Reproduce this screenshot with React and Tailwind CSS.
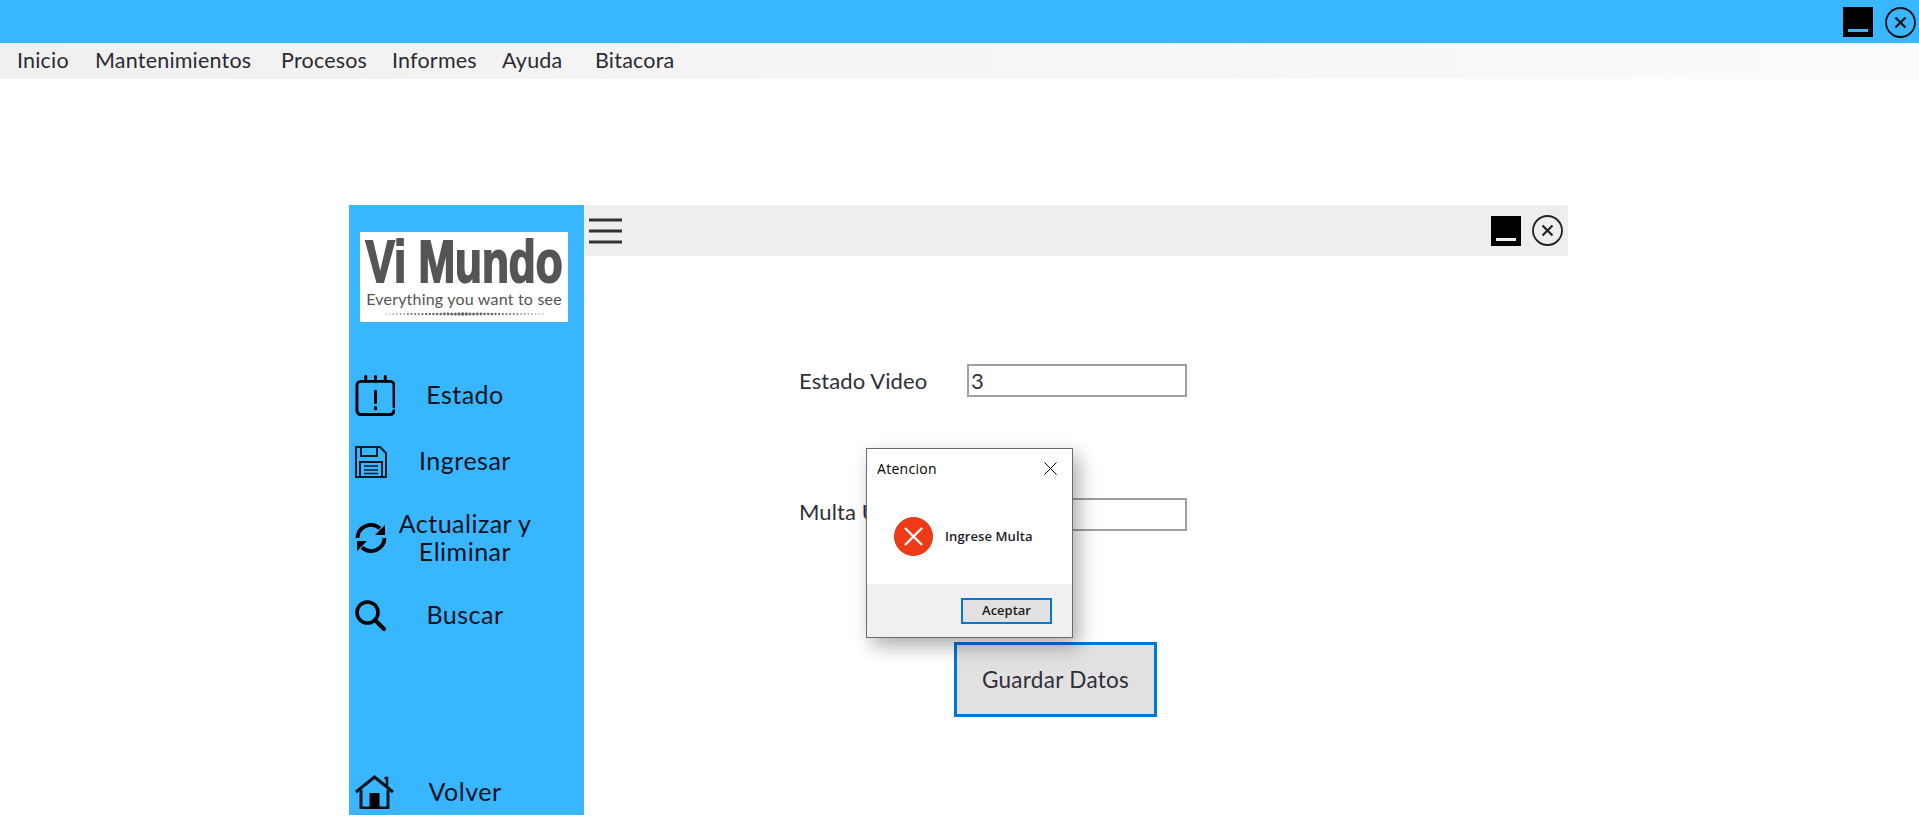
import { Fragment } from 'react';

const gothic = 'font-["Lato","Open_Sans",sans-serif]';
const segoe = 'font-["Open_Sans","Noto_Sans",sans-serif]';

const menu = [
  { label: 'Inicio', width: 'w-[78px]' },
  { label: 'Mantenimientos', width: 'w-[186px]' },
  { label: 'Procesos', width: 'w-[111px]' },
  { label: 'Informes', width: 'w-[110px]' },
  { label: 'Ayuda', width: 'w-[93px]' },
  { label: 'Bitacora', width: 'w-[90px]' },
];

function MinimizeIcon({ bar }) {
  return (
    <svg width="30" height="30" viewBox="0 0 30 30">
      <rect width="30" height="30" fill="#000" />
      <rect x="5" y="22" width="20" height="3" fill={bar} />
    </svg>
  );
}

function CloseIcon({ color = '#111' }) {
  return (
    <svg width="31" height="31" viewBox="0 0 31 31" fill="none" stroke={color}>
      <circle cx="15.5" cy="15.5" r="14.500" strokeWidth="1.800" />
      <path d="M10.5 10.5l10 10M20.5 10.5l-10 10" strokeWidth="2.200" />
    </svg>
  );
}

function CalendarIcon() {
  return (
    <svg width="41" height="41" viewBox="0 0 41 41" fill="none" stroke="#000" strokeWidth="3" strokeLinecap="round">
      <path d="M40 32V10a4 4 0 0 0-4-4H6a4 4 0 0 0-4 4v26a4 4 0 0 0 4 4h30a4 4 0 0 0 4-4" />
      <path d="M11 1v5M21 1v5M31 1v5M21 16v12" />
      <path d="M21 33v1" strokeWidth="3.4" />
    </svg>
  );
}

function SaveIcon() {
  return (
    <svg width="32" height="33" viewBox="0 0 32 33" fill="none" stroke="#0a1a28" strokeWidth="2">
      <path d="M1 2h24l6 6v24H1z" />
      <path d="M6 2v9h16V2" />
      <path d="M5 32V17h22v15" />
      <path d="M9 21h14M9 25h14M9 28.500h14" strokeWidth="1.600" />
    </svg>
  );
}

function RefreshIcon() {
  return (
    <svg width="32" height="32" viewBox="0 0 32 32" fill="none">
      <path d="M2.500 16A13.500 13.500 0 0 1 25 6.500" stroke="#000" strokeWidth="3.800" />
      <path d="M29.500 16A13.500 13.500 0 0 1 7 25.500" stroke="#000" strokeWidth="3.800" />
      <path d="M30 3v10H20z" fill="#000" />
      <path d="M2 29V19h10z" fill="#000" />
    </svg>
  );
}

function SearchIcon() {
  return (
    <svg width="31" height="31" viewBox="0 0 31 31" fill="none" stroke="#000" strokeLinecap="round">
      <circle cx="12.500" cy="12.500" r="10.500" strokeWidth="3.600" />
      <path d="M20 20l9 9" strokeWidth="4" />
    </svg>
  );
}

function HomeIcon() {
  return (
    <svg width="39" height="34" viewBox="0 0 39 34" fill="none" stroke="#06121c">
      <path d="M1 17L19.500 2 38 17" strokeWidth="3" />
      <path d="M29.500 3h2.500v9" strokeWidth="2.600" />
      <path d="M6 15v18h27V15" strokeWidth="3" />
      <rect x="14.500" y="18" width="10" height="15" fill="#000" stroke="none" />
    </svg>
  );
}

function Logo() {
  const dots = Array.from({ length: 44 }, (_, i) => {
    const d = Math.abs(i - 21) / 22;
    return { x: 4 + i * 3.650, r: 1.700 - d * 1.200 };
  });
  return (
    <div className="mt-[27px] ml-[11px] flex h-[90px] w-[208px] flex-col items-center bg-white text-[#555]">
      <div className='mt-[10px] h-[40px] w-[208px] origin-center scale-y-[1.34] text-center whitespace-nowrap font-["Liberation_Sans",sans-serif] text-[44px] leading-[40px] font-bold [-webkit-text-stroke:1.5px_#555]'>
        Vi Mundo
      </div>
      <div className='mt-[7px] h-[20px] w-[208px] text-center whitespace-nowrap font-["Lato",sans-serif] text-[16px] leading-[20px] tracking-[.2px]'>
        Everything you want to see
      </div>
      <svg width="164" height="6" viewBox="0 0 164 6" className="mt-[2px]">
        {dots.map((dot, i) => (
          <circle key={i} cx={dot.x} cy="3" r={dot.r} fill="#666" />
        ))}
      </svg>
    </div>
  );
}

function SideRow({ icon, height, children }) {
  return (
    <div className={`grid grid-cols-[40px_140px] items-center pl-[6px] ${height}`}>
      <div className="flex items-center">{icon}</div>
      <div className="pb-[2px] text-center text-[25px] leading-[28px] tracking-[.5px] text-[#06121c]">{children}</div>
    </div>
  );
}

function Sidebar() {
  return (
    <aside className="flex w-[235px] flex-col bg-[#38b6ff]">
      <Logo />
      <div className="mt-[40px]">
        <SideRow icon={<CalendarIcon />} height="h-[66px]">Estado</SideRow>
        <SideRow icon={<SaveIcon />} height="h-[66px]">Ingresar</SideRow>
        <SideRow icon={<RefreshIcon />} height="h-[88px]">
          <Fragment>Actualizar y<br />Eliminar</Fragment>
        </SideRow>
        <SideRow icon={<SearchIcon />} height="h-[66px]">Buscar</SideRow>
      </div>
      <div className="mt-auto">
        <SideRow icon={<HomeIcon />} height="h-[46px]">Volver</SideRow>
      </div>
    </aside>
  );
}

function FormRow({ label, value, className, labelClass }) {
  return (
    <div className={`flex h-[33px] items-center ${className}`}>
      <label className={`w-[168px] text-[22px] tracking-[.1px] text-[#2f2f3a] ${labelClass}`}>{label}</label>
      <input
        readOnly
        value={value}
        className="h-[33px] w-[220px] border-2 border-[#a0a0a0] bg-white px-[2px] text-[22px] text-[#2f2f3a] outline-none"
      />
    </div>
  );
}

function MessageBox() {
  return (
    <div className={`absolute top-[448px] left-[866px] flex h-[190px] w-[207px] flex-col border border-[#6b6b6b] bg-white shadow-[6px_8px_18px_rgba(0,0,0,0.32)] ${segoe}`}>
      <div className="flex h-[39px] items-center justify-between pr-[15px] pl-[10px]">
        <span className="pb-[1px] text-[14px] tracking-[.3px] text-black">Atencion</span>
        <svg width="13" height="13" viewBox="0 0 13 13" stroke="#000" strokeWidth="1">
          <path d="M.5.5l12 12M12.500.5l-12 12" />
        </svg>
      </div>
      <div className="flex flex-1 items-center pl-[27px]">
        <svg width="39" height="39" viewBox="0 0 39 39">
          <circle cx="19.500" cy="19.500" r="19" fill="#f03a17" stroke="#d93a1c" />
          <path d="M11 11l17 17M28 11L11 28" stroke="#fff" strokeWidth="2.400" />
        </svg>
        <span className="ml-[12px] pt-[2px] text-[13px] font-semibold tracking-[.1px] text-[#1a1a2a]">Ingrese Multa</span>
      </div>
      <div className="flex h-[53px] items-start justify-end bg-[#f0f0f0] pt-[14px] pr-[20px]">
        <button className="h-[26px] w-[91px] border-2 border-[#0078d7] bg-[#e1e1e1] text-[13px] font-semibold text-[#1a1a1a]">
          Aceptar
        </button>
      </div>
    </div>
  );
}

export default function App() {
  return (
    <div className={`relative h-[833px] w-full overflow-hidden bg-white ${gothic}`}>
      <div className="flex h-[43px] items-start justify-end gap-[12px] bg-[#38b6ff] pt-[7px] pr-[3px]">
        <MinimizeIcon bar="#38b6ff" />
        <CloseIcon color="#06121c" />
      </div>
      <nav className="flex h-[36px] items-center bg-gradient-to-r from-[#f0f0f0] to-[#fbfbfb] pb-[1px] pl-[17px] text-[21.500px] tracking-[.2px] text-[#2b2b33]">
        {menu.map((item) => (
          <span key={item.label} className={item.width}>{item.label}</span>
        ))}
      </nav>
      <div className="mt-[126px] ml-[349px] flex h-[610px] w-[1219px]">
        <Sidebar />
        <main className="flex flex-1 flex-col">
          <header className="flex h-[51px] items-center justify-between bg-[#eeeeee] pr-[5px] pl-[5px]">
            <svg width="33" height="26" viewBox="0 0 33 26" stroke="#333" strokeWidth="3">
              <path d="M0 2h33M0 13h33M0 24h33" />
            </svg>
            <div className="flex items-center gap-[11px]">
              <MinimizeIcon bar="#f0f0f0" />
              <CloseIcon color="#222" />
            </div>
          </header>
          <div className="pt-[108px] pl-[215px]">
            <FormRow label="Estado Video" value="3" />
            <FormRow label="Multa Usuario" value="" className="mt-[101px]" labelClass="pb-[6px]" />
            <button className="mt-[111px] ml-[155px] h-[75px] w-[203px] border-[3px] border-[#0078d7] bg-[#e1e1e1] text-[22.500px] tracking-[.3px] text-[#2f2f3a]">
              Guardar Datos
            </button>
          </div>
        </main>
      </div>
      <MessageBox />
    </div>
  );
}
